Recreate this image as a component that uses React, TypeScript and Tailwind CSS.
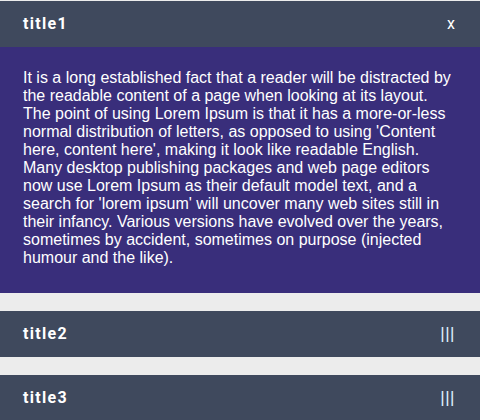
import { useState } from "react";

const BODY =
  "It is a long established fact that a reader will be distracted by the readable content of a page when looking at its layout. The point of using Lorem Ipsum is that it has a more-or-less normal distribution of letters, as opposed to using 'Content here, content here', making it look like readable English. Many desktop publishing packages and web page editors now use Lorem Ipsum as their default model text, and a search for 'lorem ipsum' will uncover many web sites still in their infancy. Various versions have evolved over the years, sometimes by accident, sometimes on purpose (injected humour and the like).";

const ITEMS = ["title1", "title2", "title3"];

export default function App() {
  const [open, setOpen] = useState(0);

  return (
    <div className="min-h-[420px] bg-[#ececec] pt-px font-['Liberation_Sans',Arial,sans-serif]">
      {ITEMS.map((title, i) => (
        <div key={title} className={i > 0 ? "mt-[18px]" : ""}>
          <button
            onClick={() => setOpen(open === i ? -1 : i)}
            className="flex h-[46px] w-full items-center justify-between bg-[#3f495d] pl-[23px] pr-[25px] text-left font-['Roboto',sans-serif] text-[16px]"
          >
            <span className="font-bold tracking-[1.3px] text-white">{title}</span>
            {open === i ? (
              <span className="text-white">x</span>
            ) : (
              <span className="font-['Liberation_Sans',sans-serif] text-[17px] tracking-[0.5px] text-[#dcefff]">|||</span>
            )}
          </button>
          {open === i && (
            <div className="bg-[#392e7b] px-[23px] pb-[26px] pt-[22px] text-[16px] leading-[18px] text-white">
              {BODY}
            </div>
          )}
        </div>
      ))}
    </div>
  );
}
